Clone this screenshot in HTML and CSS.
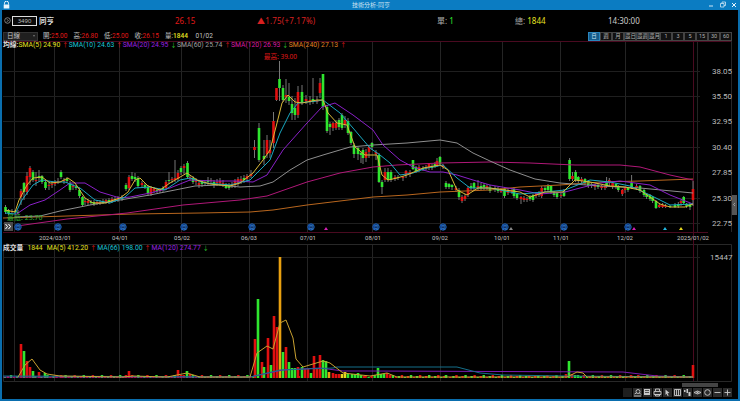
FILE: index.html
```html
<!DOCTYPE html>
<html lang="zh-Hant">
<head>
<meta charset="utf-8">
<title>技術分析-同亨</title>
<link rel="stylesheet" href="styles.css">
</head>
<body>
<div class="window">
  <header class="titlebar">
    <svg class="lock" viewBox="0 0 7 8" width="7" height="8"><path d="M1.5 3.5V2.2a2 2 0 0 1 4 0V3.5" fill="none" stroke="#e8f4fc" stroke-width="1"/><rect x="0.7" y="3.5" width="5.6" height="4" fill="#e8f4fc"/></svg>
    <span class="title">技術分析-同亨</span>
    <div class="winbtns">
      <svg viewBox="0 0 40 8" width="40" height="8"><path d="M11 5h4" stroke="#cfe6f5" stroke-width="1"/><path d="M22.500 2.500h3.500v3.500h-3.500zM24 2.500v-1.500h3.500v3.500h-1.500" fill="none" stroke="#cfe6f5" stroke-width=".8"/><path d="M34 2l4 4M38 2l-4 4" stroke="#e8f4fc" stroke-width="1"/></svg>
    </div>
  </header>

  <section class="quote">
    <div class="quote-id">
      <svg class="search" viewBox="0 0 7 7" width="7" height="7"><circle cx="3.500" cy="3.500" r="2.800" fill="none" stroke="#aaa" stroke-width=".7"/><path d="M2.500 2l2 1.500-2 1.500" fill="none" stroke="#aaa" stroke-width=".6"/></svg>
      <span class="code">3490</span>
      <span class="name">同亨</span>
    </div>
    <span class="price">26.15</span>
    <span class="change">▲1.75(+7.17%)</span>
    <span class="stat stat-single">單: <b class="up-green">1</b></span>
    <span class="stat stat-total">總: <b class="yellow">1844</b></span>
    <span class="stat stat-time">14:30:00</span>
  </section>

  <section class="toolbar">
    <div class="select"><span>日線</span><i></i></div>
    <div class="ohlc">
      <span>開:<b class="red">25.00</b></span>
      <span>高:<b class="red">26.80</b></span>
      <span>低:<b class="red">25.00</b></span>
      <span>收:<b class="red">26.15</b></span>
      <span>量:<b class="yellow">1844</b></span>
      <span class="ohlc-date">01/02</span>
    </div>
    <div class="periods">
      <span class="period active">日</span><span class="period">週</span><span class="period">月</span><span class="period">還日</span><span class="period">還週</span><span class="period">還月</span><span class="period">1</span><span class="period">3</span><span class="period">5</span><span class="period">15</span><span class="period">30</span><span class="period">60</span>
    </div>
  </section>

  <main class="chart">
    <svg class="plot" id="plot" viewBox="2 41 736 358" width="736" height="358">
      <g class="grid-v">
        <path d="M14.500 41V232M54.500 41V232M119.500 41V232M181.500 41V232M249.500 41V232M307.500 41V232M372.500 41V232M440.500 41V232M502.500 41V232M560.500 41V232M625.500 41V232M697.500 41V232"/>
        <path d="M14.500 244V381M54.500 244V381M119.500 244V381M181.500 244V381M249.500 244V381M307.500 244V381M372.500 244V381M440.500 244V381M502.500 244V381M560.500 244V381M625.500 244V381M697.500 244V381"/>
      </g>
      <path class="grid-h" d="M3 71.500H700M3 96.500H700M3 121.500H700M3 147.500H700M3 172.500H700M3 198.500H700M3 223.500H700M3 257.500H700"/>
      <path class="frame-red" d="M3 41.500H732M3 232.500H708M693.500 41V244"/>
      <path class="frame" d="M731.500 41V232M3.500 244.500H731.500V381.500H3.500Z"/>
      <path class="frame-red" d="M693.500 244V381"/>

      <g id="candles"></g>
      <g class="ma">
        <polyline class="ma240" points="3,218 67,216 133,214 200,213 250,212 273,210 307,205 340,201 373,197 407,195 440,192 490,190 520,187 560,185 600,182 640,181 693,179"/>
        <polyline class="ma120" points="17,226 67,219 127,213 183,205 240,200 267,196 307,182 340,173 373,167 397,165 440,163 490,162 530,163 575,165 620,165 640,167 670,175 693,180"/>
        <polyline class="ma60" points="15,217 40,216 60,211 90,205 120,200 150,195 175,190 195,186 220,185 240,187 260,186 273,182 290,170 307,160 323,155 350,147 373,145 407,143 440,140 457,143 473,153 490,161 510,170 535,179 560,183 600,186 640,188 693,193"/>
        <polyline class="ma20" points="15,215 30,205 45,200 60,190 70,183 85,183 100,192 120,198 130,197 150,193 170,188 190,180 215,181 235,181 253,182 267,175 283,150 307,123 322,107 335,103 353,115 373,130 383,145 400,160 413,167 430,172 443,172 457,175 473,180 490,185 520,190 540,194 565,192 580,188 600,183 620,181 650,185 670,195 693,204"/>
        <polyline class="ma10" points="5,213 15,214 22,200 33,185 42,180 55,182 65,182 80,188 95,200 110,203 125,197 135,188 150,187 165,190 180,180 190,178 205,183 230,185 250,180 260,170 270,160 280,133 290,113 298,103 317,101 323,100 340,113 353,128 370,148 380,155 390,163 400,175 413,173 427,168 443,165 457,178 470,188 480,188 490,188 520,194 545,192 565,190 590,180 610,182 630,186 650,195 670,205 693,204"/>
        <polyline class="ma5" points="5,210 15,212 19,200 27,185 33,178 42,177 50,183 60,182 68,178 75,183 85,198 93,203 105,203 120,198 128,192 135,180 140,178 148,186 160,190 170,183 187,173 197,180 210,184 230,186 240,183 253,173 263,160 270,150 277,123 282,103 288,95 295,102 302,103 317,100 323,100 328,113 337,123 347,125 355,147 365,155 377,155 382,175 388,180 397,178 407,175 423,168 440,165 448,170 457,190 467,195 478,188 490,188 505,190 520,192 530,197 545,192 563,192 575,180 590,182 610,186 625,187 640,190 660,204 670,207 685,207 693,204"/>
      </g>

      <g class="markers">
        <g id="badges"></g>
        <path class="tri-magenta" d="M326 227l2 3h-4zM634 227l2 3h-4z"/>
        <path class="tri-gray" d="M511 227l2 3h-4z"/>
        <path class="tri-cyan" d="M665 227l2 3h-4z"/>
        <path class="tri-yellow" d="M681 227l2 3h-4z"/>
      </g>

      <g class="prices">
        <text x="712" y="74">38.05</text><text x="712" y="99">35.50</text><text x="712" y="124">32.95</text><text x="712" y="150">30.40</text><text x="712" y="175">27.85</text><text x="712" y="201">25.30</text><text x="712" y="226">22.75</text>
        <text x="710" y="260">15447</text>
      </g>
      <g class="dates">
        <text x="55" y="240">2024/03/01</text><text x="120" y="240">04/01</text><text x="182" y="240">05/02</text><text x="249" y="240">06/03</text><text x="308" y="240">07/01</text><text x="373" y="240">08/01</text><text x="440" y="240">09/02</text><text x="502" y="240">10/01</text><text x="561" y="240">11/01</text><text x="625" y="240">12/02</text><text x="693" y="240">2025/01/02</text>
      </g>
      <text class="hi" x="264" y="59">最高: 39.00</text>
      <text class="lo" x="7" y="220">最低: 23.70</text>

      <g id="volume"></g>
      <g class="ma">
        <polyline class="v120" points="3,377 250,377 283,370 320,368 343,371 370,371 623,372 657,376 693,377"/>
        <polyline class="v66" points="3,376 250,377 280,370 333,368 337,367 370,367 457,367 480,373 503,375 567,376 693,377"/>
        <polyline class="v5" points="18,377 25,365 32,359 40,370 47,374 60,376 123,377 133,376 167,377 187,373 200,377 250,377 257,353 267,346 273,349 280,323 286,320 293,338 296,359 303,367 323,361 330,363 343,373 370,376 387,373 397,377 567,377 577,372 583,373 587,377 693,377"/>
      </g>

      <g class="zoomer">
        <rect class="btn-double" x="4" y="222" width="9" height="9"/>
        <path class="chev" d="M5.500 224l2 2.500-2 2.500M8.500 224l2 2.500-2 2.500"/>
        <rect class="thumb-v" x="732" y="195" width="5" height="20"/>
        <path class="thumb-arrow" d="M735 203l-1.500 1.500 1.500 1.500"/>
        <rect class="thumb-h" x="682" y="383" width="36" height="4"/>
      </g>

      <g class="tools">
        <rect class="tool-off" x="623" y="388" width="9" height="9"/>
        <rect class="tool" x="633" y="388" width="9" height="9"/><circle class="ink" cx="638" cy="391.500" r="2"/><path class="ink" d="M634 396h7M634.500 394l2-1M639.500 393l1.500 1.500"/>
        <rect class="tool" x="643" y="388" width="9" height="9"/><path class="fill" d="M644 389h6v6h-6z"/><path class="cut" d="M645 390.500h4M645 392.500h4"/>
        <rect class="tool" x="653" y="388" width="9" height="9"/><path class="ink" d="M655.500 391v-2h4v2M654 391.500h7v3h-7zM655.500 394.500h4v1.500h-4z"/>
        <rect class="tool" x="663" y="388" width="9" height="9"/><path class="fill" d="M665.500 389.500l4 3.500-2 .2 1.200 2.300-1 .5-1.200-2.300-1 1.300z"/>
        <rect class="tool" x="673" y="388" width="9" height="9"/><path class="ink" d="M674.500 389.500h6v6h-6zM676.500 389.500v6M678.500 389.500v6"/>
        <rect class="tool" x="683" y="388" width="9" height="9"/><path class="fill" d="M684 390h1.500v2h-1.500zM686.500 389h1.500v4h-1.500zM688.500 392h2v4h-2z"/>
        <rect class="tool" x="693" y="388" width="9" height="9"/><path class="ink" d="M694 392.500q3.500-3 7 0q-3.500 3-7 0z"/><circle class="fill" cx="697.500" cy="392.500" r="1"/>
        <rect class="tool" x="703" y="388" width="9" height="9"/><circle class="ink" cx="707.500" cy="392.500" r="2.800"/>
        <rect class="tool" x="713" y="388" width="9" height="9"/><path class="ink" d="M714.500 392.500h6"/>
        <rect class="tool" x="723" y="388" width="9" height="9"/><path class="ink" d="M724.500 392.500h6M727.500 389.500v6"/>
      </g>
    </svg>

    <div class="legend legend-price">
      <span class="lg-label">均線:</span><span class="c-yellow">SMA(5) 24.90<em class="ar-up">↑</em></span><span class="c-cyan">SMA(10) 24.63<em class="ar-up">↑</em></span><span class="c-purple">SMA(20) 24.95<em class="ar-down">↓</em></span><span class="c-gray">SMA(60) 25.74<em class="ar-up">↑</em></span><span class="c-magenta">SMA(120) 26.93<em class="ar-down">↓</em></span><span class="c-orange">SMA(240) 27.13<em class="ar-up">↑</em></span>
    </div>
    <div class="legend legend-volume">
      <span class="lg-label">成交量</span><span class="c-yellow">1844</span><span class="c-yellow">MA(5) 412.20<em class="ar-up">↑</em></span><span class="c-cyan">MA(66) 198.00<em class="ar-up">↑</em></span><span class="c-purple">MA(120) 274.77<em class="ar-down">↓</em></span>
    </div>
  </main>
</div>
<script src="script.js"></script>
</body>
</html>
```
FILE: styles.css
```css
* { box-sizing: border-box; }
html, body { margin: 0; padding: 0; background: #000; }
body { width: 740px; height: 401px; overflow: hidden; font-family: "Noto Sans", "Noto Sans CJK TC", sans-serif; }

.window { width: 740px; height: 401px; display: flex; flex-direction: column; background: #000; border-left: 2px solid #0a6eae; border-right: 2px solid #0a6eae; border-bottom: 2px solid #0a6eae; }

.titlebar { flex: 0 0 10px; margin: 0 -2px; background: #0b7cc2; display: flex; align-items: center; padding: 0 2px 0 3px; position: relative; color: #d8ecf8; }
.lock { display: block; }
.title { position: absolute; left: 352px; top: 0; font-size: 6px; line-height: 10px; color: #cfe4f2; white-space: nowrap; }
.winbtns { margin-left: auto; display: flex; }
.winbtns svg { display: block; }

.quote { flex: 0 0 21px; position: relative; display: flex; align-items: center; font-size: 9px; color: #ccc; }
.quote-id { display: flex; align-items: center; margin-left: 2px; width: 171px; }
.search { display: block; }
.code { margin-left: 1px; width: 25px; height: 10px; border: 1px solid #ddd; background: #0a0a0a; color: #bbb; font-size: 6px; line-height: 8px; text-align: center; }
.name { margin-left: 2px; color: #ddd; font-size: 7.500px; font-weight: 700; }
.price { margin-left: 0; width: 82px; color: #e01818; font-size: 8px; }
.change { width: 180px; color: #d82020; font-size: 8px; letter-spacing: .2px; }
.stat { color: #aaa; font-size: 8px; white-space: nowrap; }
.stat b { font-weight: 400; }
.stat-single { width: 78px; }
.stat-total { width: 93px; }
.stat-time { color: #ccc; }
.up-green { color: #2fe62f; }
.yellow { color: #e6e020; }
.red { color: #e01818; font-weight: 400; }

.toolbar { flex: 0 0 10px; display: flex; align-items: center; font-size: 6.500px; color: #c4c4c4; font-family: Roboto, "Noto Sans CJK TC", sans-serif; }
.select { margin-left: 1px; width: 35px; height: 9px; background: #1f1f1f; border: 1px solid #333; display: flex; align-items: center; justify-content: space-between; padding: 0 2px 0 3px; color: #c4c4c4; font-size: 6.500px; line-height: 7px; }
.select i { width: 0; height: 0; border-left: 1.5px solid transparent; border-right: 1.5px solid transparent; border-top: 2px solid #777; }
.ohlc { margin-left: 5px; display: flex; white-space: nowrap; }
.ohlc b { font-weight: 400; }
.ohlc span { display: block; width: 30.500px; line-height: 9px; }
.ohlc .yellow { color: #e6e020; font-weight: 500; }
.periods { display: flex; margin-left: auto; margin-right: 6px; height: 9px; }
.period { width: 12px; height: 9px; border: 1px solid #444; background: #111; color: #b0b0b0; font-size: 5.500px; line-height: 7px; text-align: center; white-space: nowrap; overflow: hidden; }
.period.active { background: #145c8c; border-color: #2a86bd; color: #cde6f6; }

.chart { flex: 1; position: relative; min-height: 0; }
.plot { display: block; }

.grid-v path { fill: none; stroke: #242424; stroke-width: 1; }
.grid-h { fill: none; stroke: #1f1f1f; stroke-width: 1; }
.frame-red { fill: none; stroke: #4a0a20; stroke-width: 1; }
.frame { fill: none; stroke: #282828; stroke-width: 1; }

.ma polyline { fill: none; stroke-width: 1; stroke-linejoin: round; }
.ma5 { stroke: #d8b838; }
.ma10 { stroke: #19a8c0; }
.ma20 { stroke: #8a20c8; }
.ma60 { stroke: #8e8e8e; }
.ma120 { stroke: #b01878; }
.ma240 { stroke: #b8661e; }
.v5 { stroke: #c8a030; }
.v66 { stroke: #156f8a; }
.v120 { stroke: #7a1ab0; }

.tri-magenta { fill: #d020b0; }
.tri-gray { fill: #888; }
.tri-cyan { fill: #22b8e0; }
.tri-yellow { fill: #e6d820; }
.badge { fill: #0c2a5e; stroke: #1c62b8; stroke-width: 1; }
.badge-text { fill: #3f8fe0; font-size: 5px; text-anchor: middle; }

.prices text { fill: #bbb; font-size: 8px; font-family: Roboto, sans-serif; }
.dates text { fill: #c4c4c4; font-size: 6px; font-family: Roboto, sans-serif; text-anchor: middle; }
.hi { fill: #e01818; font-size: 6.500px; }
.lo { fill: #33b033; font-size: 7px; }

.btn-double { fill: #4a4a4a; }
.chev { fill: none; stroke: #fff; stroke-width: 1; }
.thumb-v { fill: #555; }
.thumb-arrow { fill: none; stroke: #ccc; stroke-width: .6; }
.thumb-h { fill: #444; }

.tool { fill: #2b2b2b; }
.tool-off { fill: #1e1e1e; }
.tools .ink { fill: none; stroke: #c8c8c8; stroke-width: .9; }
.tools .fill { fill: #c8c8c8; }
.tools .cut { fill: none; stroke: #333; stroke-width: .8; }

.legend { position: absolute; left: 1px; display: flex; gap: 4px; font-family: Roboto, "Noto Sans CJK TC", sans-serif; font-size: 6.800px; line-height: 8px; white-space: nowrap; }
.legend em { display: inline-block; width: 3px; margin-left: 2px; font-style: normal; font-size: 6px; }
.legend-price { top: 0; gap: 3.500px; }
.legend-price .lg-label { margin-right: -3.500px; }
.legend-volume { top: 203px; }
.lg-label { color: #ddd; font-weight: 700; }
.c-yellow { color: #e6e020; }
.c-cyan { color: #19c4d6; }
.c-purple { color: #9b20e0; }
.c-gray { color: #a0a0a0; }
.c-magenta { color: #d81ba0; }
.c-orange { color: #e08020; }
.ar-up { color: #e01818; }
.ar-down { color: #2fc62f; }

.cw { stroke: #777; stroke-width: 1; }
.cg { fill: #2fe62f; }
.cr { fill: #e01010; }
.co { fill: #e8a010; }
.cy { fill: #e6d820; }
```
FILE: script.js
```js
var NS = "http://www.w3.org/2000/svg";
function el(parent, name, attrs, cls) {
  var n = document.createElementNS(NS, name);
  for (var k in attrs) n.setAttribute(k, attrs[k]);
  if (cls) n.setAttribute("class", cls);
  parent.appendChild(n);
  return n;
}

// x, wick top, body top, body bottom, wick bottom, colour
var candles = [
[5.5,205,207,212,214,"g"],[8.5,209,210,213,215,"g"],[12,209,211,212,213,"r"],[15,210,211,212,213,"g"],[18,210,212,213,214,"g"],
[21,189,191,197,205,"r"],[24,182,183,192,200,"g"],[27,172,176,192,195,"r"],[30,166,168,177,185,"r"],[33,170,172,180,182,"g"],
[36,172,180,181,186,"r"],[39,170,176,178,182,"g"],[42,175,176,182,184,"g"],[45.5,180,182,188,190,"g"],[49,181,185,186,190,"r"],
[52,181,184,185,188,"r"],[55,180,183,184,186,"r"],[58,178,181,182,184,"r"],[61,170,172,177,179,"g"],[64,178,180,181,184,"r"],[67,177,179,181,183,"g"],
[70,181,183,190,192,"g"],[73,184,186,187,190,"r"],[76,185,187,188,190,"g"],[79.5,188,190,196,198,"g"],[82.5,196,197,205,206,"g"],
[85,198,201,202,205,"r"],[88,199,201,203,205,"r"],[91,200,202,203,205,"g"],[94,200,202,204,206,"g"],[97,200,202,203,205,"r"],[100,200,202,203,205,"r"],[103,199,201,203,204,"g"],[106,199,200,202,204,"r"],[109,198,200,202,204,"g"],[112,197,199,201,203,"r"],[115,197,199,200,202,"g"],[118,196,198,200,202,"r"],[122,195,197,199,201,"g"],
[126,183,185,189,191,"g"],[129,175,177,188,190,"r"],[132,172,176,179,181,"g"],[135,173,177,179,182,"g"],[138,176,178,186,188,"g"],[142,181,183,185,188,"r"],[145,183,185,187,189,"g"],[148,185,187,193,196,"g"],[151,186,188,194,196,"r"],[154,187,189,191,193,"r"],[157,188,190,191,193,"g"],[160,188,189,191,193,"r"],[163,186,188,190,192,"g"],
[166,180,182,188,190,"r"],[169,172,180,181,184,"g"],[172,177,179,180,183,"r"],[175,160,178,180,182,"r"],[178,170,173,179,181,"r"],[181,166,168,172,175,"g"],[184,164,166,168,174,"r"],[187.5,161,163,177,179,"g"],[190,175,177,178,181,"r"],[193,176,178,182,184,"g"],
[196,178,180,182,185,"r"],[199,180,183,185,188,"r"],[202,180,182,184,187,"g"],[205,180,182,183,186,"r"],[208,177,180,182,185,"g"],[211,178,180,181,184,"r"],[214,180,182,185,188,"g"],[217,179,182,183,186,"r"],[220,178,181,183,186,"r"],[223,180,183,184,187,"r"],[226,183,184,188,189,"g"],[229,183,185,188,190,"g"],[232,182,184,186,188,"r"],[235,179,181,185,188,"r"],[238,177,179,183,186,"r"],[241,176,179,181,184,"r"],[244,175,178,180,183,"g"],[247,174,176,179,182,"r"],
[251,170,174,176,178,"r"],[254.5,140,147,150,158,"r"],[259,123,128,160,162,"g"],[264,140,156,159,165,"g"],[267,135,140,154,158,"r"],[270,140,150,153,158,"r"],[273.5,112,121,143,148,"r"],[276.5,88,88,100,101,"r"],[279.5,61,79,88,101,"g"],[283,85,88,100,102,"g"],[286,79,95,97,103,"r"],[289,83,97,101,105,"g"],[292,96,104,113,120,"g"],[295,98,108,115,120,"g"],[298,86,92,115,118,"r"],[302,85,92,103,105,"g"],[306,95,99,101,104,"r"],[310,96,100,102,105,"r"],[313,78,99,102,104,"g"],[317,96,100,102,104,"r"],
[320,78,83,93,98,"r"],[323,74,74,107,110,"g"],[327,105,107,131,133,"g"],[330,122,124,127,135,"g"],[333,122,123,128,131,"r"],[336,120,123,128,130,"r"],[339,118,120,127,130,"g"],[342,113,115,128,130,"g"],[345,116,120,124,128,"r"],[348,118,121,133,135,"g"],[351,131,132,143,145,"g"],[354,143,145,154,158,"g"],[358,147,148,154,160,"g"],[361,152,153,155,163,"g"],[363,148,150,158,164,"g"],[366,149,152,158,162,"r"],[369,146,147,152,158,"r"],[372,142,143,147,150,"g"],[376,150,152,154,160,"r"],
[379,153,155,182,183,"g"],[382,180,182,187,194,"g"],[385,168,172,180,182,"r"],[388,168,172,180,182,"g"],[391,170,172,180,182,"g"],[395,175,177,179,181,"r"],[398,175,177,178,180,"g"],[403,176,177,178,181,"r"],[406,170,171,175,178,"r"],[410,170,172,174,177,"r"],[413,160,160,169,170,"g"],[416,166,167,171,173,"g"],[419,165,167,170,172,"r"],[423,166,168,169,171,"g"],[426,165,167,169,170,"r"],[429,163,164,168,170,"r"],[432,164,166,168,170,"g"],[435,162,164,166,168,"g"],[437,158,161,165,167,"r"],[440,156,157,164,165,"g"],[443,164,165,167,169,"r"],
[446,181,183,187,189,"g"],[449,183,184,187,189,"g"],[452,184,185,187,190,"g"],[456,186,188,190,192,"r"],[459,188,190,197,200,"g"],[462,195,197,201,203,"r"],[465,194,196,199,201,"r"],[468,186,188,195,197,"r"],[471,183,186,188,190,"g"],[474,182,183,188,190,"g"],[478,180,186,188,190,"r"],[481,183,186,188,190,"g"],[484,183,185,187,190,"g"],[487,184,186,188,190,"r"],
[490,185,188,191,193,"g"],[495,186,188,190,192,"g"],[498,187,189,191,193,"g"],[501,188,190,192,193,"r"],[504.5,187,189,196,198,"g"],[508,188,190,193,195,"r"],[512,188,190,192,194,"r"],[514,187,189,196,198,"g"],[517,193,194,198,200,"g"],[521,196,197,199,204,"r"],[524,196,198,200,202,"r"],[527,197,199,200,202,"r"],[530,195,197,199,201,"g"],[533,194,195,200,202,"g"],[536,192,194,196,198,"r"],[539,191,193,195,197,"g"],[541.7,186,188,196,198,"r"],[545,186,188,190,192,"g"],[548,184,186,190,192,"g"],[551,185,186,192,194,"g"],[554,191,192,195,197,"g"],[557,192,193,197,199,"g"],[561,193,195,196,198,"r"],[564,189,191,196,197,"g"],
[569.6,158,160,179,181,"g"],[572.5,172,176,179,181,"r"],[575.6,170,172,180,182,"g"],[578.3,176,177,181,183,"g"],[581.6,177,179,181,183,"r"],[585,178,179,183,185,"g"],[588.3,180,181,186,188,"g"],[591.6,183,184,186,188,"g"],[595,184,185,187,190,"r"],[598,184,185,187,189,"g"],[601.6,185,186,188,190,"r"],[605,184,186,188,190,"r"],[606.6,177,182,186,188,"g"],[609.3,178,180,183,186,"r"],[612.6,182,183,187,189,"r"],[616,183,184,187,189,"g"],[618.3,185,186,190,192,"g"],[622.3,189,190,194,196,"r"],[625,187,188,190,193,"r"],[628,187,188,190,192,"g"],[631.6,175,183,187,189,"g"],[636.6,184,186,188,190,"r"],[640,185,186,191,193,"g"],[644,189,190,195,197,"g"],[646.6,193,194,197,199,"g"],[650,194,195,199,201,"g"],[652.6,196,197,201,203,"g"],[656,200,201,208,209,"g"],[659.3,203,205,207,208,"r"],[662.6,203,205,207,208,"r"],[665.6,204,206,207,208,"r"],[670,205,206,207,208,"g"],[675,203,205,207,208,"g"],[678.3,202,204,206,208,"g"],[681,200,201,203,206,"r"],[683.7,196,197,203,204,"g"],[686.6,203,204,206,208,"g"],[690,203,204,207,210,"g"],[693,181,189,200,206,"r"]
];

var g = document.getElementById("candles");
var cmap = { g: "cg", r: "cr" };
candles.forEach(function (c) {
  el(g, "line", { x1: c[0], x2: c[0], y1: c[1], y2: c[4] }, "cw");
});
candles.forEach(function (c) {
  el(g, "rect", { x: c[0] - 1.3, y: c[2], width: 2.6, height: Math.max(c[3] - c[2], 1) }, cmap[c[5]]);
});

// x, top, colour of the volume bars that stand out
var bars = [
[21,344,"r"],[24,351,"g"],[27,361,"r"],[30,367,"r"],[33,371,"g"],[39,372,"r"],[45,373,"g"],[61,375,"r"],
[126,375,"r"],[129,371,"r"],[132,375,"r"],[166,375,"r"],[178,370,"r"],[181,375,"r"],[187,371,"g"],[190,374,"r"],
[255,339,"r"],[258,299,"g"],[262,362,"r"],[264,367,"g"],[268,338,"r"],[271,365,"g"],[274,316,"r"],[277,327,"r"],[280,257,"o"],[283,352,"g"],[286,347,"r"],[289,362,"g"],[292,368,"g"],[295,368,"g"],[298,367,"r"],[302,367,"g"],[305,369,"r"],[308,369,"r"],[311,373,"g"],[314,356,"r"],[317,368,"r"],[320,355,"r"],[323,360,"g"],[326,361,"g"],[329,372,"o"],[333,373,"r"],[336,374,"r"],[339,374,"r"],[342,374,"y"],[345,372,"y"],[348,374,"g"],[352,374,"g"],[355,374,"g"],[358,373,"g"],[361,375,"g"],[364,376,"r"],
[378,368,"g"],[381,374,"g"],[384,374,"g"],[387,373,"r"],[390,375,"r"],[446,375,"g"],
[566,374,"r"],[569,361,"g"],[572,374,"r"],[575,375,"g"],[578,375,"g"],[631,375,"r"],[693,365,"r"]
];
var v = document.getElementById("volume");
var seen = {};
bars.forEach(function (b) { seen[Math.round(b[0] / 3)] = 1; });
var fill = ["cg", "cr", "cr", "cg", "cy", "cr", "cg"];
for (var i = 0; i < 228; i++) {
  var x = 5 + i * 3.03;
  if (seen[Math.round(x / 3)]) continue;
  var h = 1 + (i * 7 % 3);
  el(v, "rect", { x: x - 1.2, y: 378 - h, width: 2.4, height: h }, fill[(i * 5 + (i >> 2)) % 7]);
}
bars.forEach(function (b) {
  el(v, "rect", { x: b[0] - 1.3, y: b[1], width: 2.6, height: 378 - b[1] }, "c" + b[2]);
});

var badges = document.getElementById("badges");
[18, 58, 123, 184, 252, 311, 376, 443, 505, 564, 628].forEach(function (x) {
  el(badges, "circle", { cx: x, cy: 227, r: 3.2 }, "badge");
  el(badges, "text", { x: x, y: 229 }, "badge-text").textContent = "月";
});
```
